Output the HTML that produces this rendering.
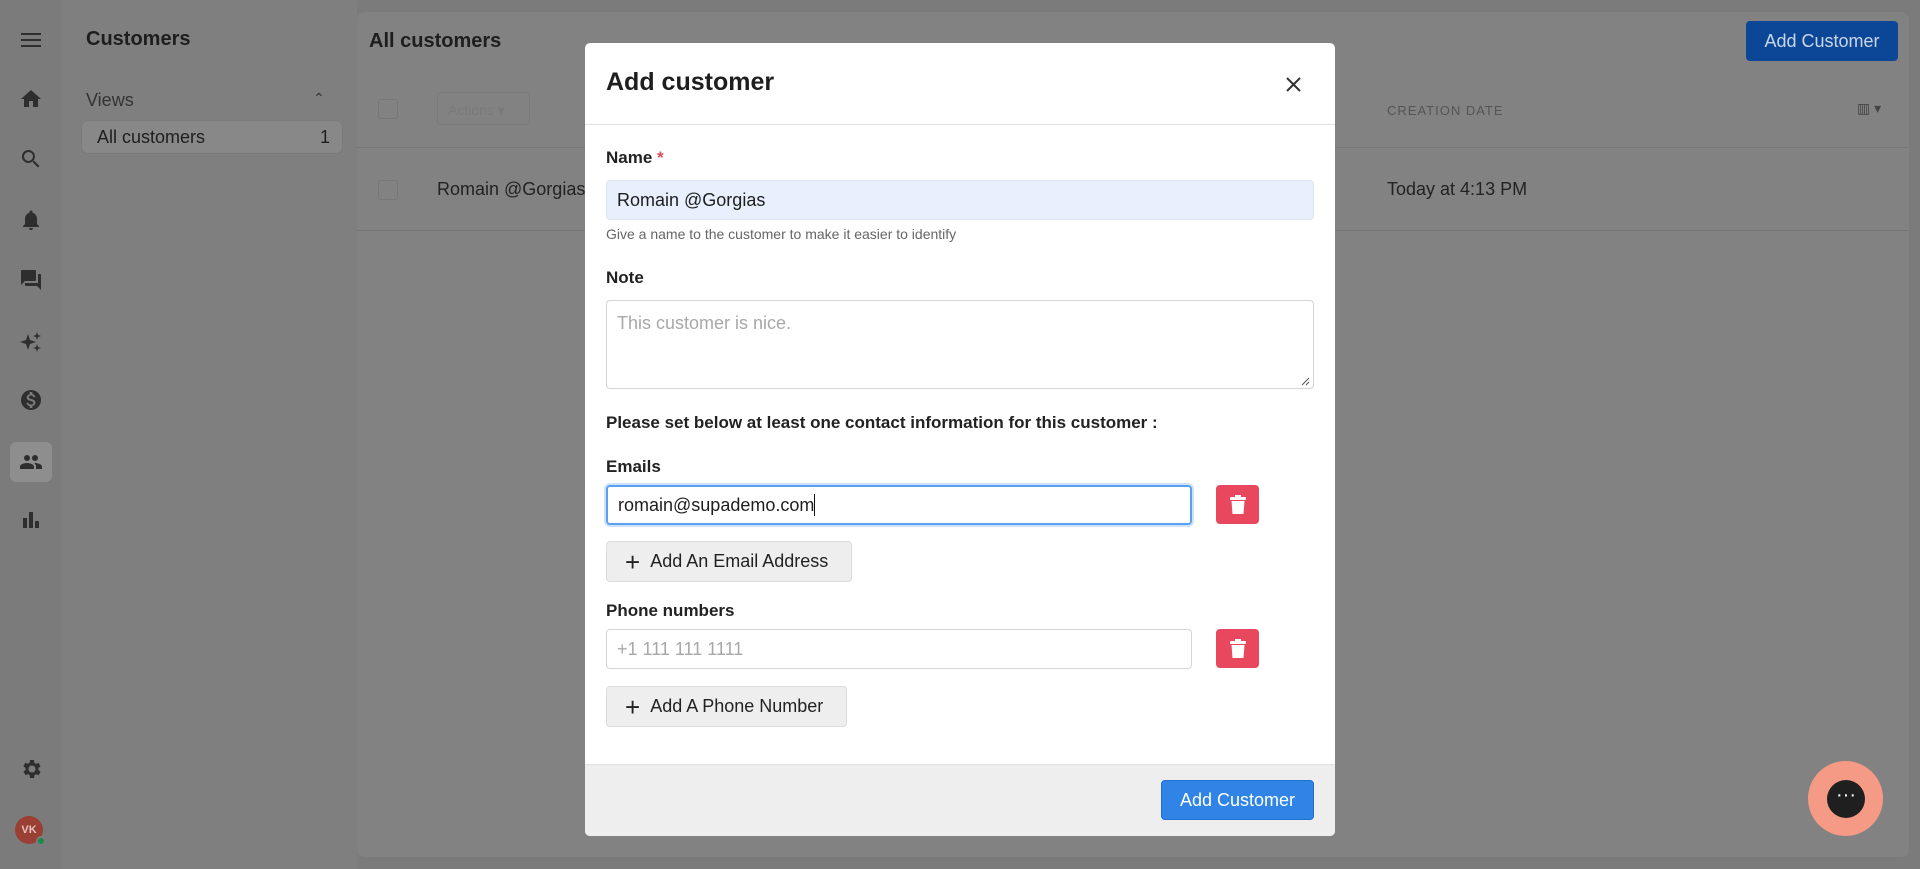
<!DOCTYPE html>
<html><head><meta charset="utf-8"><style>
*{box-sizing:border-box;margin:0;padding:0}
body{width:1920px;height:869px;overflow:hidden;background:#7b7b7b;font-family:"Liberation Sans",sans-serif;position:relative;color:#1e1e1e}
.abs{position:absolute}
.nav svg{position:absolute;left:19px;width:24px;height:24px;fill:#2e2e2e}
.side{left:61px;top:0;width:296px;height:869px;background:#7f7f7f}
.main{left:357px;top:12px;width:1552px;height:845px;background:#828282;border-radius:8px}
.modal{left:585px;top:43px;width:750px;height:793px;background:#fff;border-radius:5px;overflow:hidden}
.lbl{position:absolute;left:21px;font-size:17px;font-weight:bold;color:#222}
.inp{position:absolute;left:21px;border:1px solid #d5d5d5;border-radius:4px;font-size:18px;padding-left:10px;display:flex;align-items:center}
.trash{position:absolute;left:631px;width:43px;height:39px;background:#e8475d;border-radius:4px;display:flex;align-items:center;justify-content:center}
.btn{position:absolute;left:21px;height:41px;background:#eeeeee;border:1px solid #dcdcdc;border-radius:4px;font-size:18px;display:flex;align-items:center;padding-left:18px;color:#222}
.btn b{font-weight:normal;font-size:26px;margin-right:10px;line-height:1}
</style></head><body>
<div class="nav">
<svg style="top:28px" viewBox="0 0 24 24"><rect x="2" y="5" width="20" height="2"/><rect x="2" y="11" width="20" height="2"/><rect x="2" y="17" width="20" height="2"/></svg>
<svg style="top:87px" viewBox="0 0 24 24"><path d="M10 20v-6h4v6h5v-8h3L12 3 2 12h3v8z"/></svg>
<svg style="top:147px" viewBox="0 0 24 24"><path d="M15.5 14h-.8l-.3-.3A6.5 6.5 0 1 0 9.5 16a6.5 6.5 0 0 0 4.2-1.6l.3.3v.8l5 5 1.5-1.5zm-6 0A4.5 4.5 0 1 1 14 9.5 4.5 4.5 0 0 1 9.5 14z"/></svg>
<svg style="top:208px" viewBox="0 0 24 24"><path d="M12 22a2 2 0 0 0 2-2h-4a2 2 0 0 0 2 2zm6-6v-5c0-3-1.6-5.6-4.5-6.3V4a1.5 1.5 0 0 0-3 0v.7C7.6 5.4 6 8 6 11v5l-2 2v1h16v-1z"/></svg>
<svg style="top:268px" viewBox="0 0 24 24"><path d="M21 6h-2v9H6v2c0 .6.4 1 1 1h11l4 4V7c0-.6-.4-1-1-1zm-4 6V3c0-.6-.4-1-1-1H3c-.6 0-1 .4-1 1v14l4-4h10c.6 0 1-.4 1-1z"/></svg>
<svg style="top:330px" viewBox="0 0 24 24"><path d="M9 4l2 6 6 2-6 2-2 6-2-6-6-2 6-2zM18 2l1 3 3 1-3 1-1 3-1-3-3-1 3-1zM18 14l1 3 3 1-3 1-1 3-1-3-3-1 3-1z"/></svg>
<svg style="top:388px" viewBox="0 0 24 24"><path d="M12 2a10 10 0 1 0 0 20 10 10 0 0 0 0-20zm1.4 16.1V20h-2.7v-1.9c-1.7-.4-3.1-1.5-3.200-3.4h2c.1 1 .8 1.8 2.6 1.8 1.9 0 2.3-.9 2.3-1.5 0-.8-.4-1.5-2.600-2-2.4-.6-4.1-1.6-4.1-3.6 0-1.7 1.4-2.8 3-3.2V4h2.7v1.9c1.9.5 2.8 1.9 2.9 3.4h-2c-.1-1.1-.6-1.8-2.2-1.8-1.5 0-2.4.7-2.4 1.6 0 .8.7 1.4 2.6 1.9 2 .5 4.1 1.4 4.1 3.8 0 1.8-1.3 2.8-3 3.1z"/></svg>
<div class="abs" style="left:10px;top:442px;width:42px;height:40px;background:#8e8e8e;border-radius:6px"></div>
<svg style="top:450px" viewBox="0 0 24 24"><path d="M16 11a3 3 0 1 0 0-6 3 3 0 0 0 0 6zm-8 0a3 3 0 1 0 0-6 3 3 0 0 0 0 6zm0 2c-2.3 0-7 1.2-7 3.5V19h14v-2.5C15 14.2 10.3 13 8 13zm8 0h-1c1.2.8 2 2 2 3.5V19h6v-2.5c0-2.3-4.7-3.5-7-3.5z"/></svg>
<svg style="top:508px" viewBox="0 0 24 24"><rect x="4" y="10" width="4" height="10"/><rect x="10" y="4" width="4" height="16"/><rect x="16" y="13" width="4" height="7"/></svg>
<svg style="top:757px" viewBox="0 0 24 24"><path d="M19.4 13a7.5 7.5 0 0 0 0-2l2.1-1.6-2-3.5-2.5 1a7 7 0 0 0-1.7-1L15 3h-4l-.4 2.7a7 7 0 0 0-1.7 1l-2.5-1-2 3.5L6.6 11a7.5 7.5 0 0 0 0 2l-2.1 1.6 2 3.5 2.5-1c.5.4 1.1.8 1.7 1L11 21h4l.4-2.7c.6-.3 1.2-.6 1.7-1l2.5 1 2-3.5zM13 15.5a3.5 3.5 0 1 1 0-7 3.5 3.5 0 0 1 0 7z"/></svg>
<div class="abs" style="left:15px;top:816px;width:28px;height:28px;border-radius:50%;background:#9b3f35;color:#e7c2bb;font-size:11px;font-weight:bold;display:flex;align-items:center;justify-content:center">VK</div>
<div class="abs" style="left:36px;top:836px;width:10px;height:10px;border-radius:50%;background:#1d8a4a;border:2px solid #7b7b7b"></div>
</div>
<div class="abs side">
<div class="abs" style="left:25px;top:28px;font-size:20px;font-weight:bold;color:#1e1e1e">Customers</div>
<div class="abs" style="left:25px;top:90px;font-size:18px;color:#333">Views</div>
<div class="abs" style="left:252px;top:90px;font-size:14px;color:#333">&#8963;</div>
<div class="abs" style="left:20px;top:120px;width:262px;height:34px;background:#888;border-radius:7px;border:1px solid #7a7a7a"></div>
<div class="abs" style="left:36px;top:127px;font-size:18px;color:#1e1e1e">All customers</div>
<div class="abs" style="left:259px;top:127px;font-size:18px;color:#1e1e1e">1</div>
</div>
<div class="abs main">
<div class="abs" style="left:12px;top:18px;font-size:20px;font-weight:bold;color:#1e1e1e">All customers</div>
<div class="abs" style="left:1389px;top:9px;width:152px;height:40px;background:#0c4797;border-radius:4px;color:#c9d6e8;font-size:18px;display:flex;align-items:center;justify-content:center">Add Customer</div>
<div class="abs" style="left:21px;top:87px;width:20px;height:20px;border:1px solid #777;border-radius:3px"></div>
<div class="abs" style="left:80px;top:80px;width:93px;height:33px;border:1px solid #7a7a7a;border-radius:4px;color:#7a7a7a;font-size:14px;padding:9px 10px">Actions ▾</div>
<div class="abs" style="left:1030px;top:91px;font-size:13px;color:#555;letter-spacing:1px">CREATION DATE</div>
<div class="abs" style="left:1500px;top:88px;font-size:14px;color:#444">▥ ▾</div>
<div class="abs" style="left:0;top:135px;width:1552px;height:1px;background:#767676"></div>
<div class="abs" style="left:21px;top:168px;width:20px;height:20px;border:1px solid #777;border-radius:3px"></div>
<div class="abs" style="left:80px;top:167px;font-size:18px;color:#222">Romain @Gorgias</div>
<div class="abs" style="left:1030px;top:167px;font-size:18px;color:#222">Today at 4:13 PM</div>
<div class="abs" style="left:0;top:218px;width:1552px;height:1px;background:#767676"></div>
</div>
<div class="abs modal">
<div class="abs" style="left:21px;top:25px;font-size:25px;font-weight:bold;color:#1e1e1e">Add customer</div>
<svg class="abs" style="left:700px;top:33px" width="17" height="17" viewBox="0 0 17 17"><path d="M2 2L15 15M15 2L2 15" stroke="#333" stroke-width="2"/></svg>
<div class="abs" style="left:0;top:81px;width:750px;height:1px;background:#e2e2e2"></div>
<div class="lbl" style="top:105px">Name <span style="color:#e04a5b">*</span></div>
<div class="inp" style="top:137px;width:708px;height:40px;background:#e8f0fd;border-color:#dfe5ee">Romain @Gorgias</div>
<div class="abs" style="left:21px;top:183px;font-size:14px;color:#666">Give a name to the customer to make it easier to identify</div>
<div class="lbl" style="top:225px">Note</div>
<div class="inp" style="top:257px;width:708px;height:89px;align-items:flex-start;padding-top:12px;color:#a8a8a8">This customer is nice.</div>
<svg class="abs" style="left:716px;top:334px" width="9" height="9" viewBox="0 0 9 9"><path d="M1 8L8 1M5 8L8 5" stroke="#555" stroke-width="1"/></svg>
<div class="lbl" style="top:370px">Please set below at least one contact information for this customer :</div>
<div class="lbl" style="top:414px">Emails</div>
<div class="inp" style="top:442px;width:586px;height:40px;border:2px solid #5aa0f0;box-shadow:0 0 0 2px #cfe2fb">romain@supademo.com<span style="display:inline-block;width:1px;height:22px;background:#111"></span></div>
<div class="trash" style="top:442px"><svg width="16" height="20" viewBox="0 0 16 20"><rect x="5" y="0" width="6" height="3" fill="#fff"/><rect x="0" y="2" width="16" height="3" rx="1" fill="#fff"/><path d="M1.5 6h13l-1 13H2.5z" fill="#fff"/></svg></div>
<div class="btn" style="top:498px;width:246px"><b>+</b>Add An Email Address</div>
<div class="lbl" style="top:558px">Phone numbers</div>
<div class="inp" style="top:586px;width:586px;height:40px;color:#a8a8a8">+1 111 111 1111</div>
<div class="trash" style="top:586px"><svg width="16" height="20" viewBox="0 0 16 20"><rect x="5" y="0" width="6" height="3" fill="#fff"/><rect x="0" y="2" width="16" height="3" rx="1" fill="#fff"/><path d="M1.5 6h13l-1 13H2.5z" fill="#fff"/></svg></div>
<div class="btn" style="top:643px;width:241px"><b>+</b>Add A Phone Number</div>
<div class="abs" style="left:0;top:721px;width:750px;height:72px;background:#eeeeee;border-top:1px solid #e0e0e0"></div>
<div class="abs" style="left:576px;top:737px;width:153px;height:40px;background:#2f84e5;border:1px solid #1f6fcf;border-radius:4px;color:#fff;font-size:18px;display:flex;align-items:center;justify-content:center">Add Customer</div>
</div>
<div class="abs" style="left:1808px;top:761px;width:75px;height:75px;border-radius:50%;background:#f59a85"></div>
<div class="abs" style="left:1827px;top:780px;width:38px;height:38px;border-radius:50%;background:#1f1f1f;color:#fff;font-size:20px;display:flex;align-items:center;justify-content:center;line-height:1;padding-bottom:8px">···</div>
</body></html>
